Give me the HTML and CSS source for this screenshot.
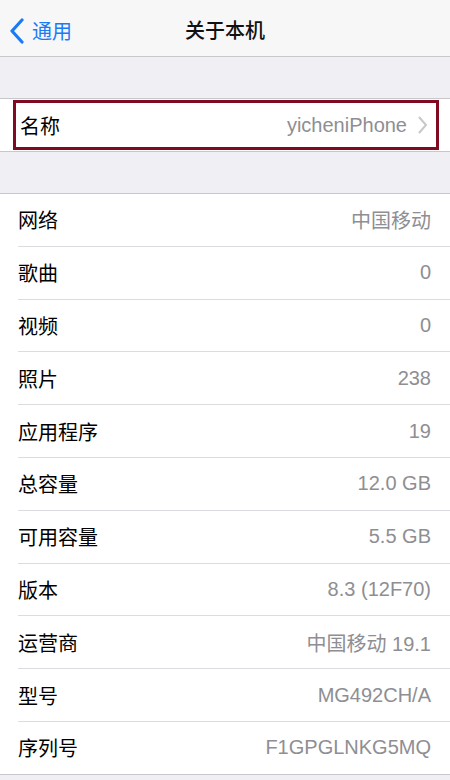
FILE: index.html
```html
<!DOCTYPE html>
<html lang="zh-CN">
<head>
    <meta charset="UTF-8">
    <meta name="viewport" content="width=device-width, initial-scale=1.0">
    <title>关于本机</title>
    <link rel="stylesheet" href="styles.css">
</head>
<body>
    <div class="navbar">
        <div class="back">
            <svg class="back-icon" width="16" height="26" viewBox="0 0 16 26">
                <path d="M13 2 L3 13 L13 24" fill="none" stroke="#1a7cf5" stroke-width="3.2" stroke-linecap="round" stroke-linejoin="round"/>
            </svg>
            <span>通用</span>
        </div>
        <div class="title">关于本机</div>
    </div>

    <div class="gap"></div>

    <div class="group">
        <div class="row row-name">
            <div class="mark">
                <span class="label">名称</span>
                <span class="value">yicheniPhone</span>
                <svg class="chevron" width="11" height="20" viewBox="0 0 11 20">
                    <path d="M2 2 L9 10 L2 18" fill="none" stroke="#c7c7cc" stroke-width="2"/>
                </svg>
            </div>
        </div>
    </div>

    <div class="gap"></div>

    <div class="group">
        <div class="row"><span class="label">网络</span><span class="value">中国移动</span></div>
        <div class="row"><span class="label">歌曲</span><span class="value">0</span></div>
        <div class="row"><span class="label">视频</span><span class="value">0</span></div>
        <div class="row"><span class="label">照片</span><span class="value">238</span></div>
        <div class="row"><span class="label">应用程序</span><span class="value">19</span></div>
        <div class="row"><span class="label">总容量</span><span class="value">12.0 GB</span></div>
        <div class="row"><span class="label">可用容量</span><span class="value">5.5 GB</span></div>
        <div class="row"><span class="label">版本</span><span class="value">8.3 (12F70)</span></div>
        <div class="row"><span class="label">运营商</span><span class="value">中国移动 19.1</span></div>
        <div class="row"><span class="label">型号</span><span class="value">MG492CH/A</span></div>
        <div class="row"><span class="label">序列号</span><span class="value">F1GPGLNKG5MQ</span></div>
    </div>
</body>
</html>
```

FILE: styles.css
```css
body {
    margin: 0;
    background-color: #efeff4;
    font-family: "Liberation Sans", "Noto Sans CJK SC", sans-serif;
    font-size: 20px;
    color: #000;
    overflow: hidden;
}
.navbar {
    height: 56px;
    background-color: #f7f7f8;
    border-bottom: 1px solid #c8c7cc;
    display: flex;
    align-items: center;
    justify-content: center;
    position: relative;
}
.back {
    position: absolute;
    left: 9px;
    top: 16px;
    display: flex;
    align-items: center;
    gap: 7px;
    color: #1a7cf5;
}
.back-icon {
    display: block;
}
.title {
    font-weight: 500;
    color: #111;
    padding-top: 3px;
}
.gap {
    height: 41px;
}
.group {
    background-color: #fff;
    border-top: 1px solid #c8c7cc;
    border-bottom: 1px solid #c8c7cc;
}
.row {
    height: 51.8px;
    margin-left: 18px;
    padding-right: 19px;
    display: flex;
    align-items: center;
    justify-content: space-between;
    border-bottom: 1px solid #dcdce0;
}
.row:last-child {
    border-bottom: none;
}
.row-name {
    height: 52px;
    margin-left: 0;
    padding-right: 0;
}
.mark {
    flex: 1;
    height: 44px;
    margin: 0 11px 0 13px;
    border: 3px solid #800a1f;
    display: flex;
    align-items: center;
    padding: 0 8px 0 4px;
}
.mark .label {
    flex: 1;
}
.value {
    color: #8e8e93;
}
.chevron {
    margin-left: 10px;
    display: block;
}
```
